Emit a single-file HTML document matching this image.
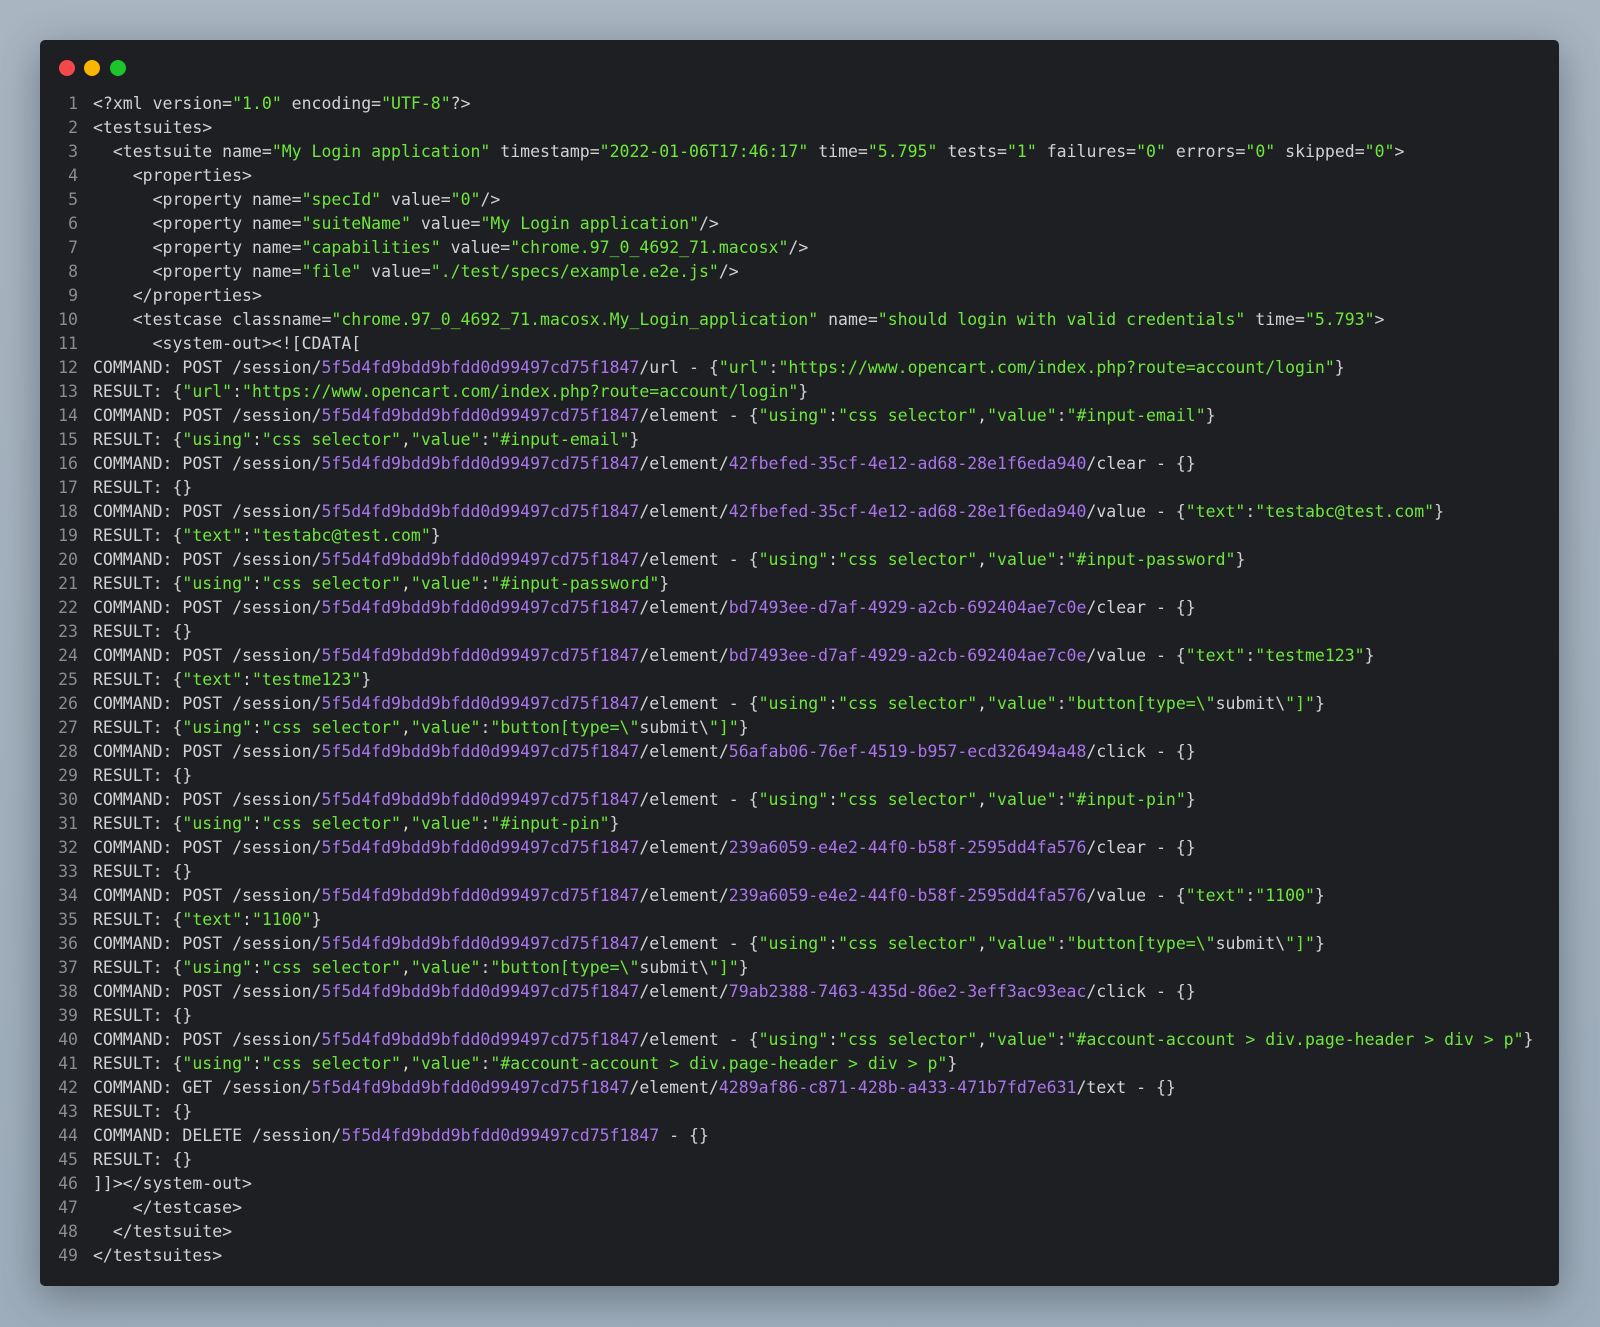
<!DOCTYPE html>
<html><head><meta charset="utf-8"><style>
html,body{margin:0;padding:0;width:1600px;height:1327px;overflow:hidden;background:linear-gradient(180deg,#a9b5c0 0%,#9eadbb 100%);}
.win{position:absolute;left:40px;top:40px;width:1519px;height:1246px;background:#1e1f22;border-radius:5px;box-shadow:0 10px 40px rgba(40,50,60,0.45);}
.dot{position:absolute;top:20px;width:16px;height:16px;border-radius:50%;}
pre{position:absolute;left:0;top:52px;margin:0;font-family:"DejaVu Sans Mono","Liberation Mono",monospace;font-size:16.5px;line-height:24px;color:#d2d2d2;white-space:pre;}
.n{display:inline-block;width:38px;text-align:right;color:#8c8c8c;margin-right:15px;}
.g{color:#6ee63c}.p{color:#a975ec}
</style></head><body>
<div class="win">
<div class="dot" style="left:19px;background:#f4484a"></div>
<div class="dot" style="left:44px;background:#f8b600"></div>
<div class="dot" style="left:70px;background:#1ec52a"></div>
<pre><span class="n">1</span>&lt;?xml version=<span class="g">"1.0"</span> encoding=<span class="g">"UTF-8"</span>?&gt;
<span class="n">2</span>&lt;testsuites&gt;
<span class="n">3</span>  &lt;testsuite name=<span class="g">"My Login application"</span> timestamp=<span class="g">"2022-01-06T17:46:17"</span> time=<span class="g">"5.795"</span> tests=<span class="g">"1"</span> failures=<span class="g">"0"</span> errors=<span class="g">"0"</span> skipped=<span class="g">"0"</span>&gt;
<span class="n">4</span>    &lt;properties&gt;
<span class="n">5</span>      &lt;property name=<span class="g">"specId"</span> value=<span class="g">"0"</span>/&gt;
<span class="n">6</span>      &lt;property name=<span class="g">"suiteName"</span> value=<span class="g">"My Login application"</span>/&gt;
<span class="n">7</span>      &lt;property name=<span class="g">"capabilities"</span> value=<span class="g">"chrome.97_0_4692_71.macosx"</span>/&gt;
<span class="n">8</span>      &lt;property name=<span class="g">"file"</span> value=<span class="g">"./test/specs/example.e2e.js"</span>/&gt;
<span class="n">9</span>    &lt;/properties&gt;
<span class="n">10</span>    &lt;testcase classname=<span class="g">"chrome.97_0_4692_71.macosx.My_Login_application"</span> name=<span class="g">"should login with valid credentials"</span> time=<span class="g">"5.793"</span>&gt;
<span class="n">11</span>      &lt;system-out&gt;&lt;![CDATA[
<span class="n">12</span>COMMAND: POST /session/<span class="p">5f5d4fd9bdd9bfdd0d99497cd75f1847</span>/url - {<span class="g">"url"</span>:<span class="g">"https://www.opencart.com/index.php?route=account/login"</span>}
<span class="n">13</span>RESULT: {<span class="g">"url"</span>:<span class="g">"https://www.opencart.com/index.php?route=account/login"</span>}
<span class="n">14</span>COMMAND: POST /session/<span class="p">5f5d4fd9bdd9bfdd0d99497cd75f1847</span>/element - {<span class="g">"using"</span>:<span class="g">"css selector"</span>,<span class="g">"value"</span>:<span class="g">"#input-email"</span>}
<span class="n">15</span>RESULT: {<span class="g">"using"</span>:<span class="g">"css selector"</span>,<span class="g">"value"</span>:<span class="g">"#input-email"</span>}
<span class="n">16</span>COMMAND: POST /session/<span class="p">5f5d4fd9bdd9bfdd0d99497cd75f1847</span>/element/<span class="p">42fbefed-35cf-4e12-ad68-28e1f6eda940</span>/clear - {}
<span class="n">17</span>RESULT: {}
<span class="n">18</span>COMMAND: POST /session/<span class="p">5f5d4fd9bdd9bfdd0d99497cd75f1847</span>/element/<span class="p">42fbefed-35cf-4e12-ad68-28e1f6eda940</span>/value - {<span class="g">"text"</span>:<span class="g">"testabc@test.com"</span>}
<span class="n">19</span>RESULT: {<span class="g">"text"</span>:<span class="g">"testabc@test.com"</span>}
<span class="n">20</span>COMMAND: POST /session/<span class="p">5f5d4fd9bdd9bfdd0d99497cd75f1847</span>/element - {<span class="g">"using"</span>:<span class="g">"css selector"</span>,<span class="g">"value"</span>:<span class="g">"#input-password"</span>}
<span class="n">21</span>RESULT: {<span class="g">"using"</span>:<span class="g">"css selector"</span>,<span class="g">"value"</span>:<span class="g">"#input-password"</span>}
<span class="n">22</span>COMMAND: POST /session/<span class="p">5f5d4fd9bdd9bfdd0d99497cd75f1847</span>/element/<span class="p">bd7493ee-d7af-4929-a2cb-692404ae7c0e</span>/clear - {}
<span class="n">23</span>RESULT: {}
<span class="n">24</span>COMMAND: POST /session/<span class="p">5f5d4fd9bdd9bfdd0d99497cd75f1847</span>/element/<span class="p">bd7493ee-d7af-4929-a2cb-692404ae7c0e</span>/value - {<span class="g">"text"</span>:<span class="g">"testme123"</span>}
<span class="n">25</span>RESULT: {<span class="g">"text"</span>:<span class="g">"testme123"</span>}
<span class="n">26</span>COMMAND: POST /session/<span class="p">5f5d4fd9bdd9bfdd0d99497cd75f1847</span>/element - {<span class="g">"using"</span>:<span class="g">"css selector"</span>,<span class="g">"value"</span>:<span class="g">"button[type=\"</span>submit\<span class="g">"]"</span>}
<span class="n">27</span>RESULT: {<span class="g">"using"</span>:<span class="g">"css selector"</span>,<span class="g">"value"</span>:<span class="g">"button[type=\"</span>submit\<span class="g">"]"</span>}
<span class="n">28</span>COMMAND: POST /session/<span class="p">5f5d4fd9bdd9bfdd0d99497cd75f1847</span>/element/<span class="p">56afab06-76ef-4519-b957-ecd326494a48</span>/click - {}
<span class="n">29</span>RESULT: {}
<span class="n">30</span>COMMAND: POST /session/<span class="p">5f5d4fd9bdd9bfdd0d99497cd75f1847</span>/element - {<span class="g">"using"</span>:<span class="g">"css selector"</span>,<span class="g">"value"</span>:<span class="g">"#input-pin"</span>}
<span class="n">31</span>RESULT: {<span class="g">"using"</span>:<span class="g">"css selector"</span>,<span class="g">"value"</span>:<span class="g">"#input-pin"</span>}
<span class="n">32</span>COMMAND: POST /session/<span class="p">5f5d4fd9bdd9bfdd0d99497cd75f1847</span>/element/<span class="p">239a6059-e4e2-44f0-b58f-2595dd4fa576</span>/clear - {}
<span class="n">33</span>RESULT: {}
<span class="n">34</span>COMMAND: POST /session/<span class="p">5f5d4fd9bdd9bfdd0d99497cd75f1847</span>/element/<span class="p">239a6059-e4e2-44f0-b58f-2595dd4fa576</span>/value - {<span class="g">"text"</span>:<span class="g">"1100"</span>}
<span class="n">35</span>RESULT: {<span class="g">"text"</span>:<span class="g">"1100"</span>}
<span class="n">36</span>COMMAND: POST /session/<span class="p">5f5d4fd9bdd9bfdd0d99497cd75f1847</span>/element - {<span class="g">"using"</span>:<span class="g">"css selector"</span>,<span class="g">"value"</span>:<span class="g">"button[type=\"</span>submit\<span class="g">"]"</span>}
<span class="n">37</span>RESULT: {<span class="g">"using"</span>:<span class="g">"css selector"</span>,<span class="g">"value"</span>:<span class="g">"button[type=\"</span>submit\<span class="g">"]"</span>}
<span class="n">38</span>COMMAND: POST /session/<span class="p">5f5d4fd9bdd9bfdd0d99497cd75f1847</span>/element/<span class="p">79ab2388-7463-435d-86e2-3eff3ac93eac</span>/click - {}
<span class="n">39</span>RESULT: {}
<span class="n">40</span>COMMAND: POST /session/<span class="p">5f5d4fd9bdd9bfdd0d99497cd75f1847</span>/element - {<span class="g">"using"</span>:<span class="g">"css selector"</span>,<span class="g">"value"</span>:<span class="g">"#account-account &gt; div.page-header &gt; div &gt; p"</span>}
<span class="n">41</span>RESULT: {<span class="g">"using"</span>:<span class="g">"css selector"</span>,<span class="g">"value"</span>:<span class="g">"#account-account &gt; div.page-header &gt; div &gt; p"</span>}
<span class="n">42</span>COMMAND: GET /session/<span class="p">5f5d4fd9bdd9bfdd0d99497cd75f1847</span>/element/<span class="p">4289af86-c871-428b-a433-471b7fd7e631</span>/text - {}
<span class="n">43</span>RESULT: {}
<span class="n">44</span>COMMAND: DELETE /session/<span class="p">5f5d4fd9bdd9bfdd0d99497cd75f1847</span> - {}
<span class="n">45</span>RESULT: {}
<span class="n">46</span>]]&gt;&lt;/system-out&gt;
<span class="n">47</span>    &lt;/testcase&gt;
<span class="n">48</span>  &lt;/testsuite&gt;
<span class="n">49</span>&lt;/testsuites&gt;</pre>
</div>
</body></html>
